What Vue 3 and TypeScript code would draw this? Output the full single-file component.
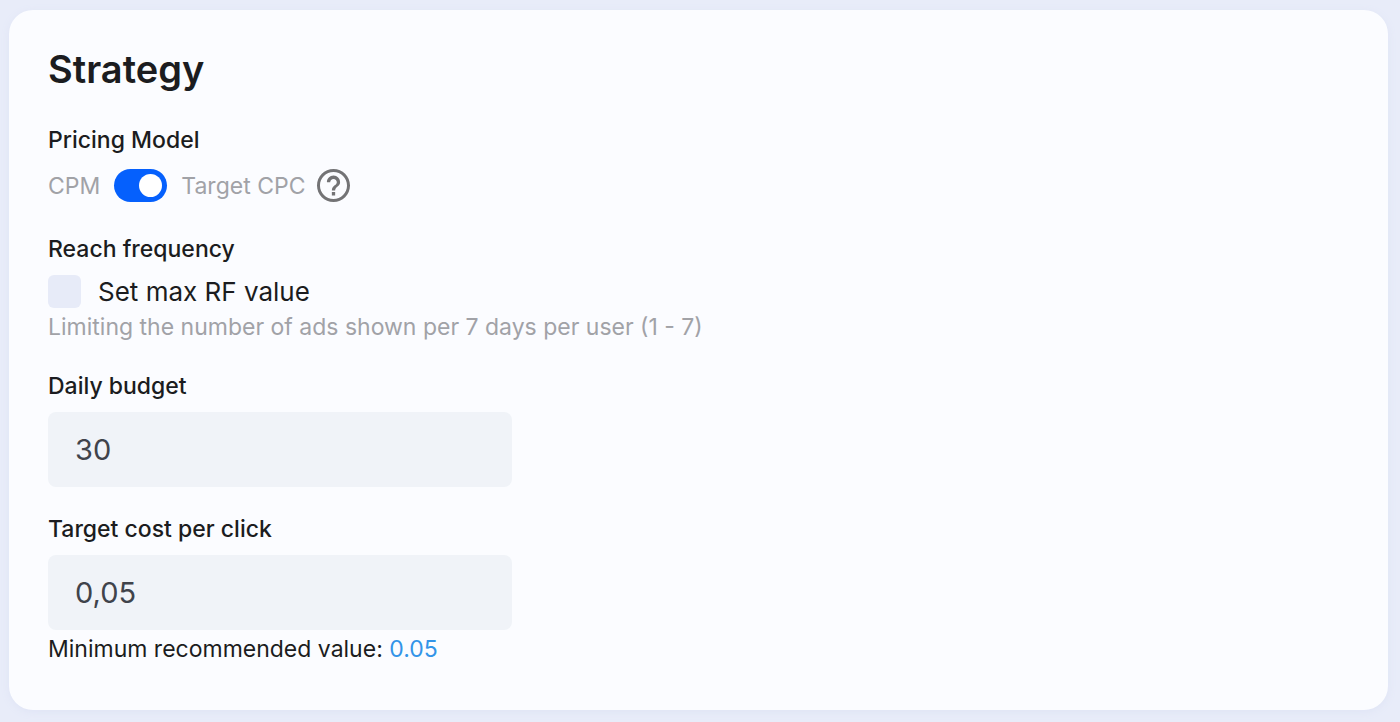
<script setup lang="ts">
import { ref } from 'vue'

const targetCpc = ref<boolean>(true)
const limitFrequency = ref<boolean>(false)
const dailyBudget = ref<string>('30')
const costPerClick = ref<string>('0,05')
const recommended = '0.05'

function useRecommended(): void {
  costPerClick.value = recommended.replace('.', ',')
}
</script>

<template>
  <main class="page">
    <form class="card" @submit.prevent>
      <h1 class="title">Strategy</h1>

      <section class="group">
        <h2 id="pricing-label" class="label">Pricing Model</h2>
        <div class="pricing" role="group" aria-labelledby="pricing-label">
          <span class="muted">CPM</span>
          <input id="pricing" v-model="targetCpc" class="switch" type="checkbox" role="switch" />
          <label class="muted" for="pricing">Target CPC</label>
          <button class="help" type="button" aria-label="About pricing models">
            <svg viewBox="2 2 20 20" aria-hidden="true">
              <path
                fill="currentColor"
                d="M11 18h2v-2h-2v2zm1-16C6.480 2 2 6.480 2 12s4.480 10 10 10 10-4.480 10-10S17.520 2 12 2zm0 18.200c-4.520 0-8.200-3.680-8.200-8.200S7.480 3.800 12 3.800s8.200 3.680 8.200 8.200-3.680 8.200-8.200 8.200zm0-14.200c-2.210 0-4 1.790-4 4h2c0-1.100.9-2 2-2s2 .9 2 2c0 2-3 1.750-3 5h2c0-2.250 3-2.500 3-5 0-2.210-1.790-4-4-4z"
              />
            </svg>
          </button>
        </div>
      </section>

      <section class="group reach">
        <h2 class="label">Reach frequency</h2>
        <label class="check" for="frequency">
          <input
            id="frequency"
            v-model="limitFrequency"
            class="box"
            type="checkbox"
            aria-describedby="frequency-hint"
          />
          <span>Set max RF value</span>
        </label>
        <p id="frequency-hint" class="hint muted">
          Limiting the number of ads shown per 7 days per user (1 - 7)
        </p>
      </section>

      <section class="group budget">
        <label class="label" for="budget">Daily budget</label>
        <input id="budget" v-model="dailyBudget" class="field" type="text" inputmode="decimal" />
      </section>

      <section class="group cost">
        <label class="label" for="cpc">Target cost per click</label>
        <input id="cpc" v-model="costPerClick" class="field" type="text" inputmode="decimal" />
        <p class="hint">
          Minimum recommended value:
          <a class="link" href="#cpc" @click.prevent="useRecommended">{{ recommended }}</a>
        </p>
      </section>
    </form>
  </main>
</template>

<style>
body {
  margin: 0;
  background: #e8ecf9;
}
</style>

<style scoped>
.page {
  box-sizing: border-box;
  min-height: 100vh;
  padding: 10px 12px 12px 9px;
  background: #e8ecf9;
  font-family: Inter, "Liberation Sans", sans-serif;
  font-size: 23px;
  line-height: 28px;
  color: #1b1c20;
}

.card {
  box-sizing: border-box;
  padding: 35px 39px 47px;
  border-radius: 24px;
  background: #fbfcff;
  box-shadow: 0 2px 8px #dfe4f5;
}

.title {
  margin: 0 0 33px;
  font-size: 38px;
  line-height: 48px;
  font-weight: 600;
}

.group {
  display: flex;
  flex-direction: column;
  align-items: flex-start;
  margin-bottom: 33px;
}

.group.reach {
  margin-bottom: 31px;
}

.group.budget {
  margin-bottom: 28px;
}

.group.cost {
  margin-bottom: 0;
}

.label {
  margin: 0 0 12px;
  font-size: 23px;
  line-height: 28px;
  font-weight: 500;
}

.muted {
  color: #a1a2a7;
}

.pricing {
  display: flex;
  align-items: center;
  margin-top: 3px;
}

.switch {
  appearance: none;
  display: flex;
  align-items: center;
  box-sizing: border-box;
  width: 53px;
  height: 33px;
  margin: 0 14px;
  padding: 0 5px;
  border-radius: 17px;
  background: #b9bdc9;
  cursor: pointer;
}

.switch::after {
  content: "";
  width: 23px;
  height: 23px;
  border-radius: 50%;
  background: #ffffff;
}

.switch:checked {
  justify-content: flex-end;
  background: #0560fd;
}

.help {
  width: 33px;
  height: 33px;
  margin-left: 12px;
  padding: 0;
  border: 0;
  background: none;
  color: #737375;
  cursor: pointer;
}

.help svg {
  display: block;
  width: 100%;
  height: 100%;
}

.check {
  display: flex;
  align-items: center;
  gap: 17px;
  font-size: 26px;
  line-height: 33px;
  cursor: pointer;
}

.box {
  appearance: none;
  width: 33px;
  height: 33px;
  margin: 0;
  border-radius: 6px;
  background: #e7ebf8;
  cursor: pointer;
}

.box:checked {
  background: #0560fd;
}

.hint {
  margin: 5px 0 0;
}

.field {
  box-sizing: border-box;
  width: 464px;
  max-width: 100%;
  height: 75px;
  padding: 0 27px;
  border: 0;
  border-radius: 8px;
  background: #f0f3f8;
  color: #40434b;
  font-family: inherit;
  font-size: 29px;
}

.link {
  color: #3294e8;
  text-decoration: none;
}
</style>
